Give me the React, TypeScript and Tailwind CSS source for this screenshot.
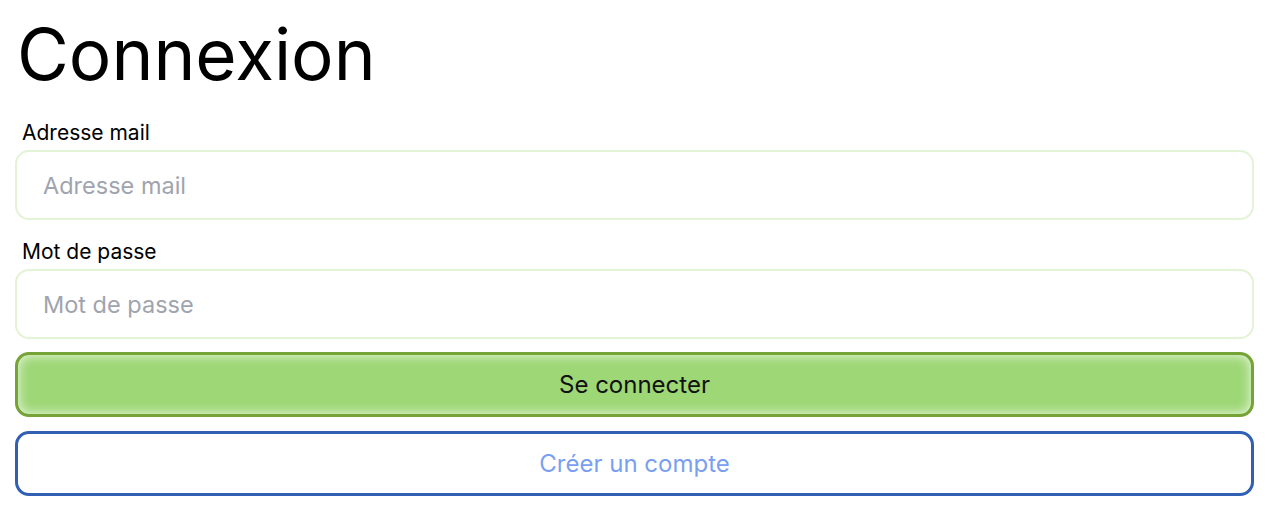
import React, { useState } from "react";

export default function App(): React.JSX.Element {
  const [email, setEmail] = useState("");
  const [password, setPassword] = useState("");

  return (
    <main className="min-h-screen bg-white font-['Inter',sans-serif] text-black">
      <div className="ml-[15px] w-[1239px] flex flex-col pt-[10px]">
        <h1 className="text-[71px] leading-[88px] font-normal pl-[2px]">Connexion</h1>

        <form className="flex flex-col mt-[22px]" onSubmit={(e) => e.preventDefault()}>
          <label className="pl-[7px] text-[21px] leading-[26px] mb-[4px]">Adresse mail</label>
          <input
            value={email}
            onChange={(e) => setEmail(e.target.value)}
            placeholder="Adresse mail"
            className="h-[70px] w-full rounded-[14px] border-2 border-[#e3f4d6] px-[26px] text-[23.5px] outline-none placeholder:text-[#a0a4ae]"
          />

          <label className="pl-[7px] text-[21px] leading-[26px] mt-[19px] mb-[4px]">Mot de passe</label>
          <input
            value={password}
            onChange={(e) => setPassword(e.target.value)}
            type="password"
            placeholder="Mot de passe"
            className="h-[70px] w-full rounded-[14px] border-2 border-[#e3f4d6] px-[26px] text-[23.5px] outline-none placeholder:text-[#a0a4ae]"
          />

          <button
            type="submit"
            className="mt-[13px] h-[65px] w-full rounded-[14px] border-[3px] border-[#76a336] bg-[#9ed776] text-[24px] text-[#111] shadow-[inset_0_0_12px_rgba(255,255,255,0.85)]"
          >
            Se connecter
          </button>

          <button
            type="button"
            className="mt-[14px] h-[65px] w-full rounded-[14px] border-[3px] border-[#305fb3] bg-white text-[24px] text-[#7b9ff0]"
          >
            Créer un compte
          </button>
        </form>
      </div>
    </main>
  );
}
